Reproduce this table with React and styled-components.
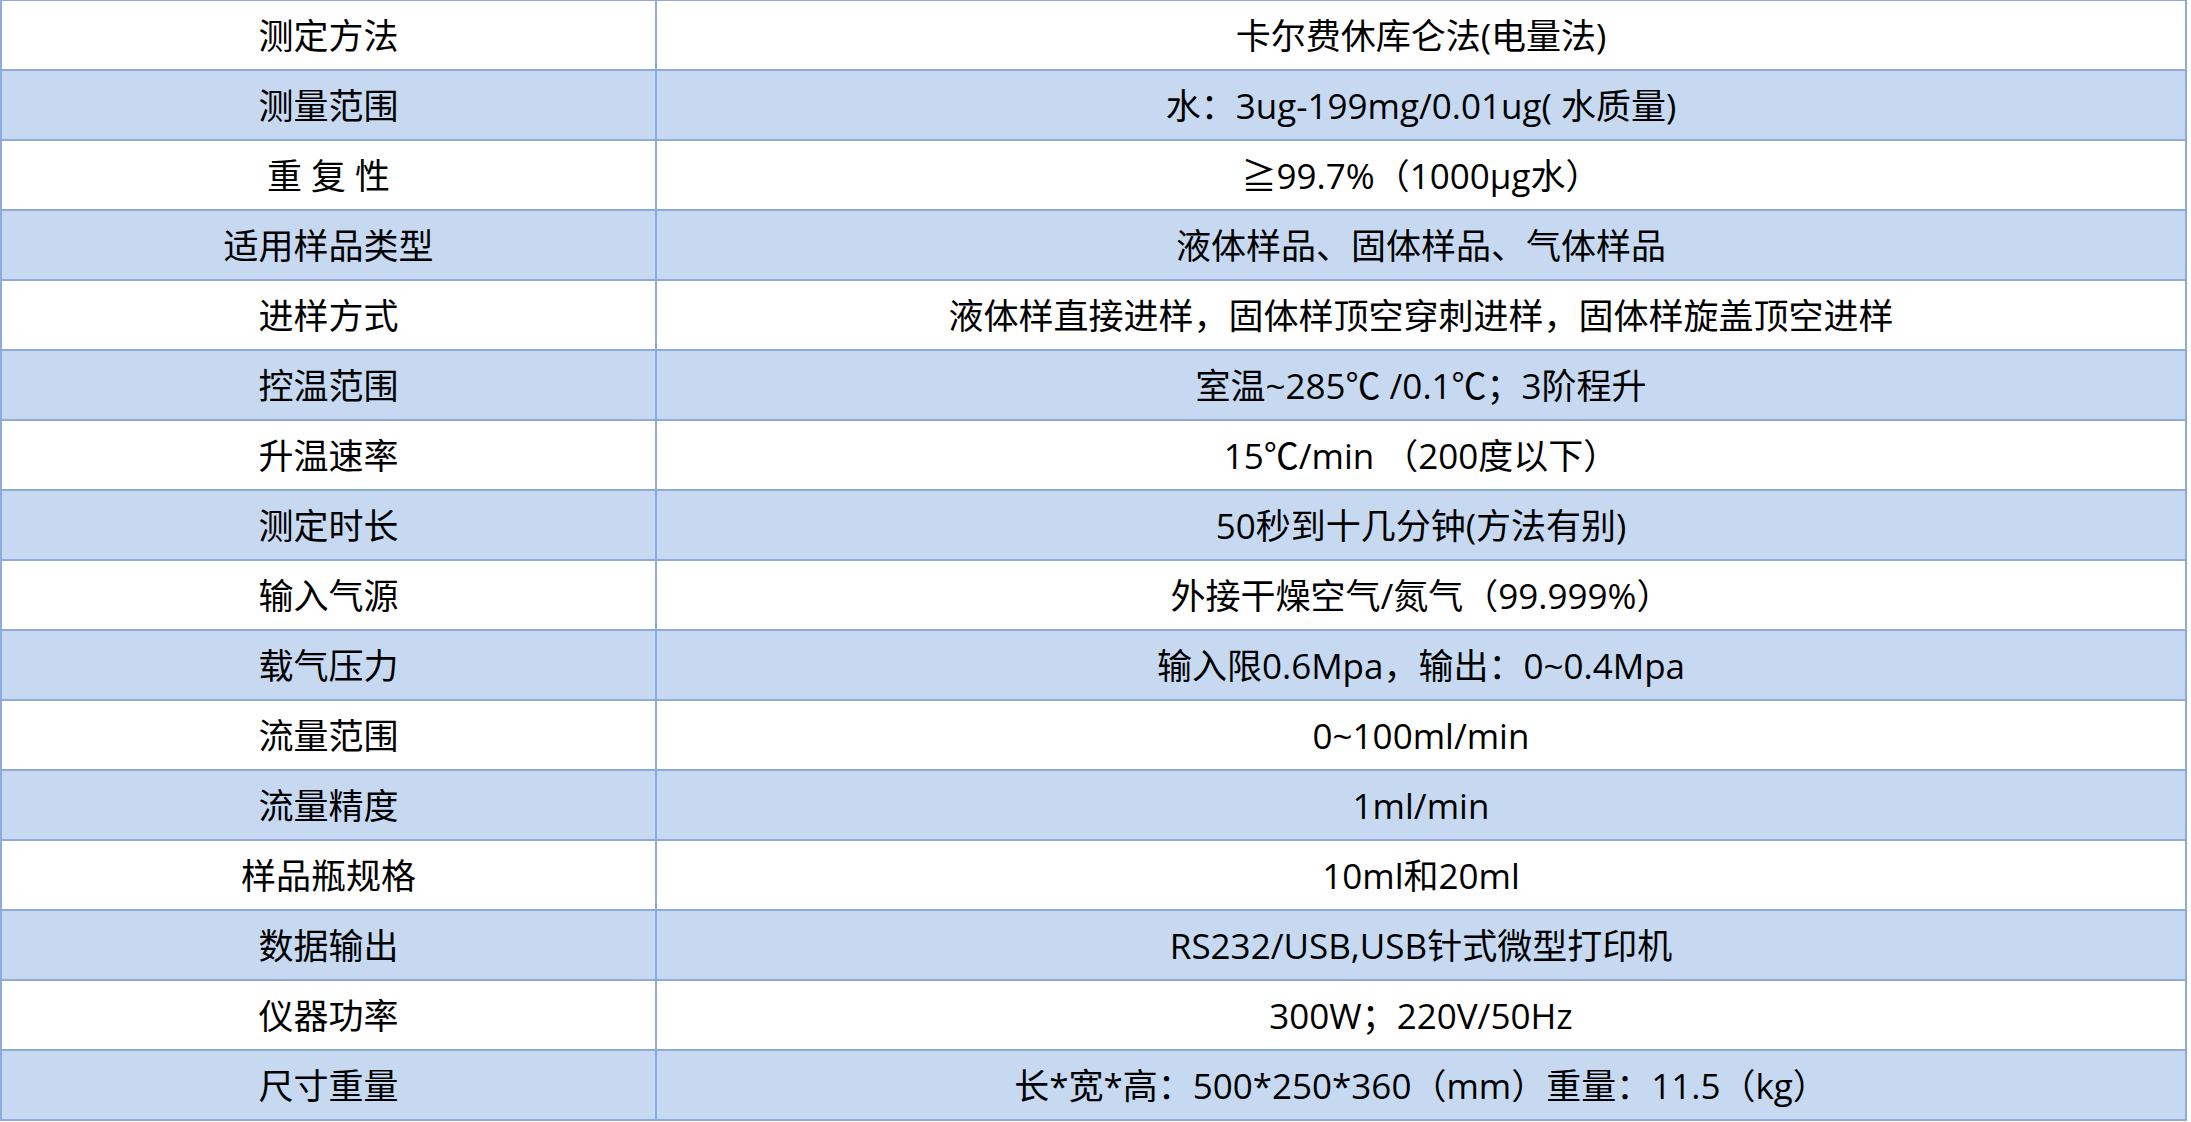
import React from 'react';
import styled, { createGlobalStyle } from 'styled-components';

const GlobalStyle = createGlobalStyle`
  html, body {
    margin: 0;
    padding: 0;
    background: #ffffff;
  }
`;

const specs = [
  ['测定方法', '卡尔费休库仑法(电量法)'],
  ['测量范围', '水：3ug-199mg/0.01ug( 水质量)'],
  ['重 复 性', '≧99.7%（1000μg水）'],
  ['适用样品类型', '液体样品、固体样品、气体样品'],
  ['进样方式', '液体样直接进样，固体样顶空穿刺进样，固体样旋盖顶空进样'],
  ['控温范围', '室温~285℃ /0.1℃；3阶程升'],
  ['升温速率', '15℃/min （200度以下）'],
  ['测定时长', '50秒到十几分钟(方法有别)'],
  ['输入气源', '外接干燥空气/氮气（99.999%）'],
  ['载气压力', '输入限0.6Mpa，输出：0~0.4Mpa'],
  ['流量范围', '0~100ml/min'],
  ['流量精度', '1ml/min'],
  ['样品瓶规格', '10ml和20ml'],
  ['数据输出', 'RS232/USB,USB针式微型打印机'],
  ['仪器功率', '300W；220V/50Hz'],
  ['尺寸重量', '长*宽*高：500*250*360（mm）重量：11.5（kg）'],
];

const SpecTable = styled.table`
  width: 2187px;
  border-collapse: separate;
  border-spacing: 0;
  border-top: 1px solid #8eaadb;
  border-left: 2px solid #8eaadb;
  table-layout: fixed;
  font-family: "Open Sans", "Noto Sans CJK SC", sans-serif;
  font-size: 35px;
  color: #000000;
`;

const Row = styled.tr`
  height: 70px;
  background: ${(p) => (p.$shaded ? '#c6d9f0' : '#ffffff')};
`;

const Cell = styled.td`
  box-sizing: border-box;
  height: 70px;
  padding: 0 8px;
  border-right: 2px solid #8eaadb;
  border-bottom: 2px solid #8eaadb;
  text-align: center;
  vertical-align: middle;
  white-space: nowrap;
  line-height: 1;
`;

const LabelCell = styled(Cell)`
  width: 655px;
`;

const ValueCell = styled(Cell)`
  width: auto;
`;

export default function App() {
  return (
    <>
      <GlobalStyle />
      <SpecTable>
        <tbody>
          {specs.map(([label, value], i) => (
            <Row key={label} $shaded={i % 2 === 1}>
              <LabelCell>{label}</LabelCell>
              <ValueCell>{value}</ValueCell>
            </Row>
          ))}
        </tbody>
      </SpecTable>
    </>
  );
}
